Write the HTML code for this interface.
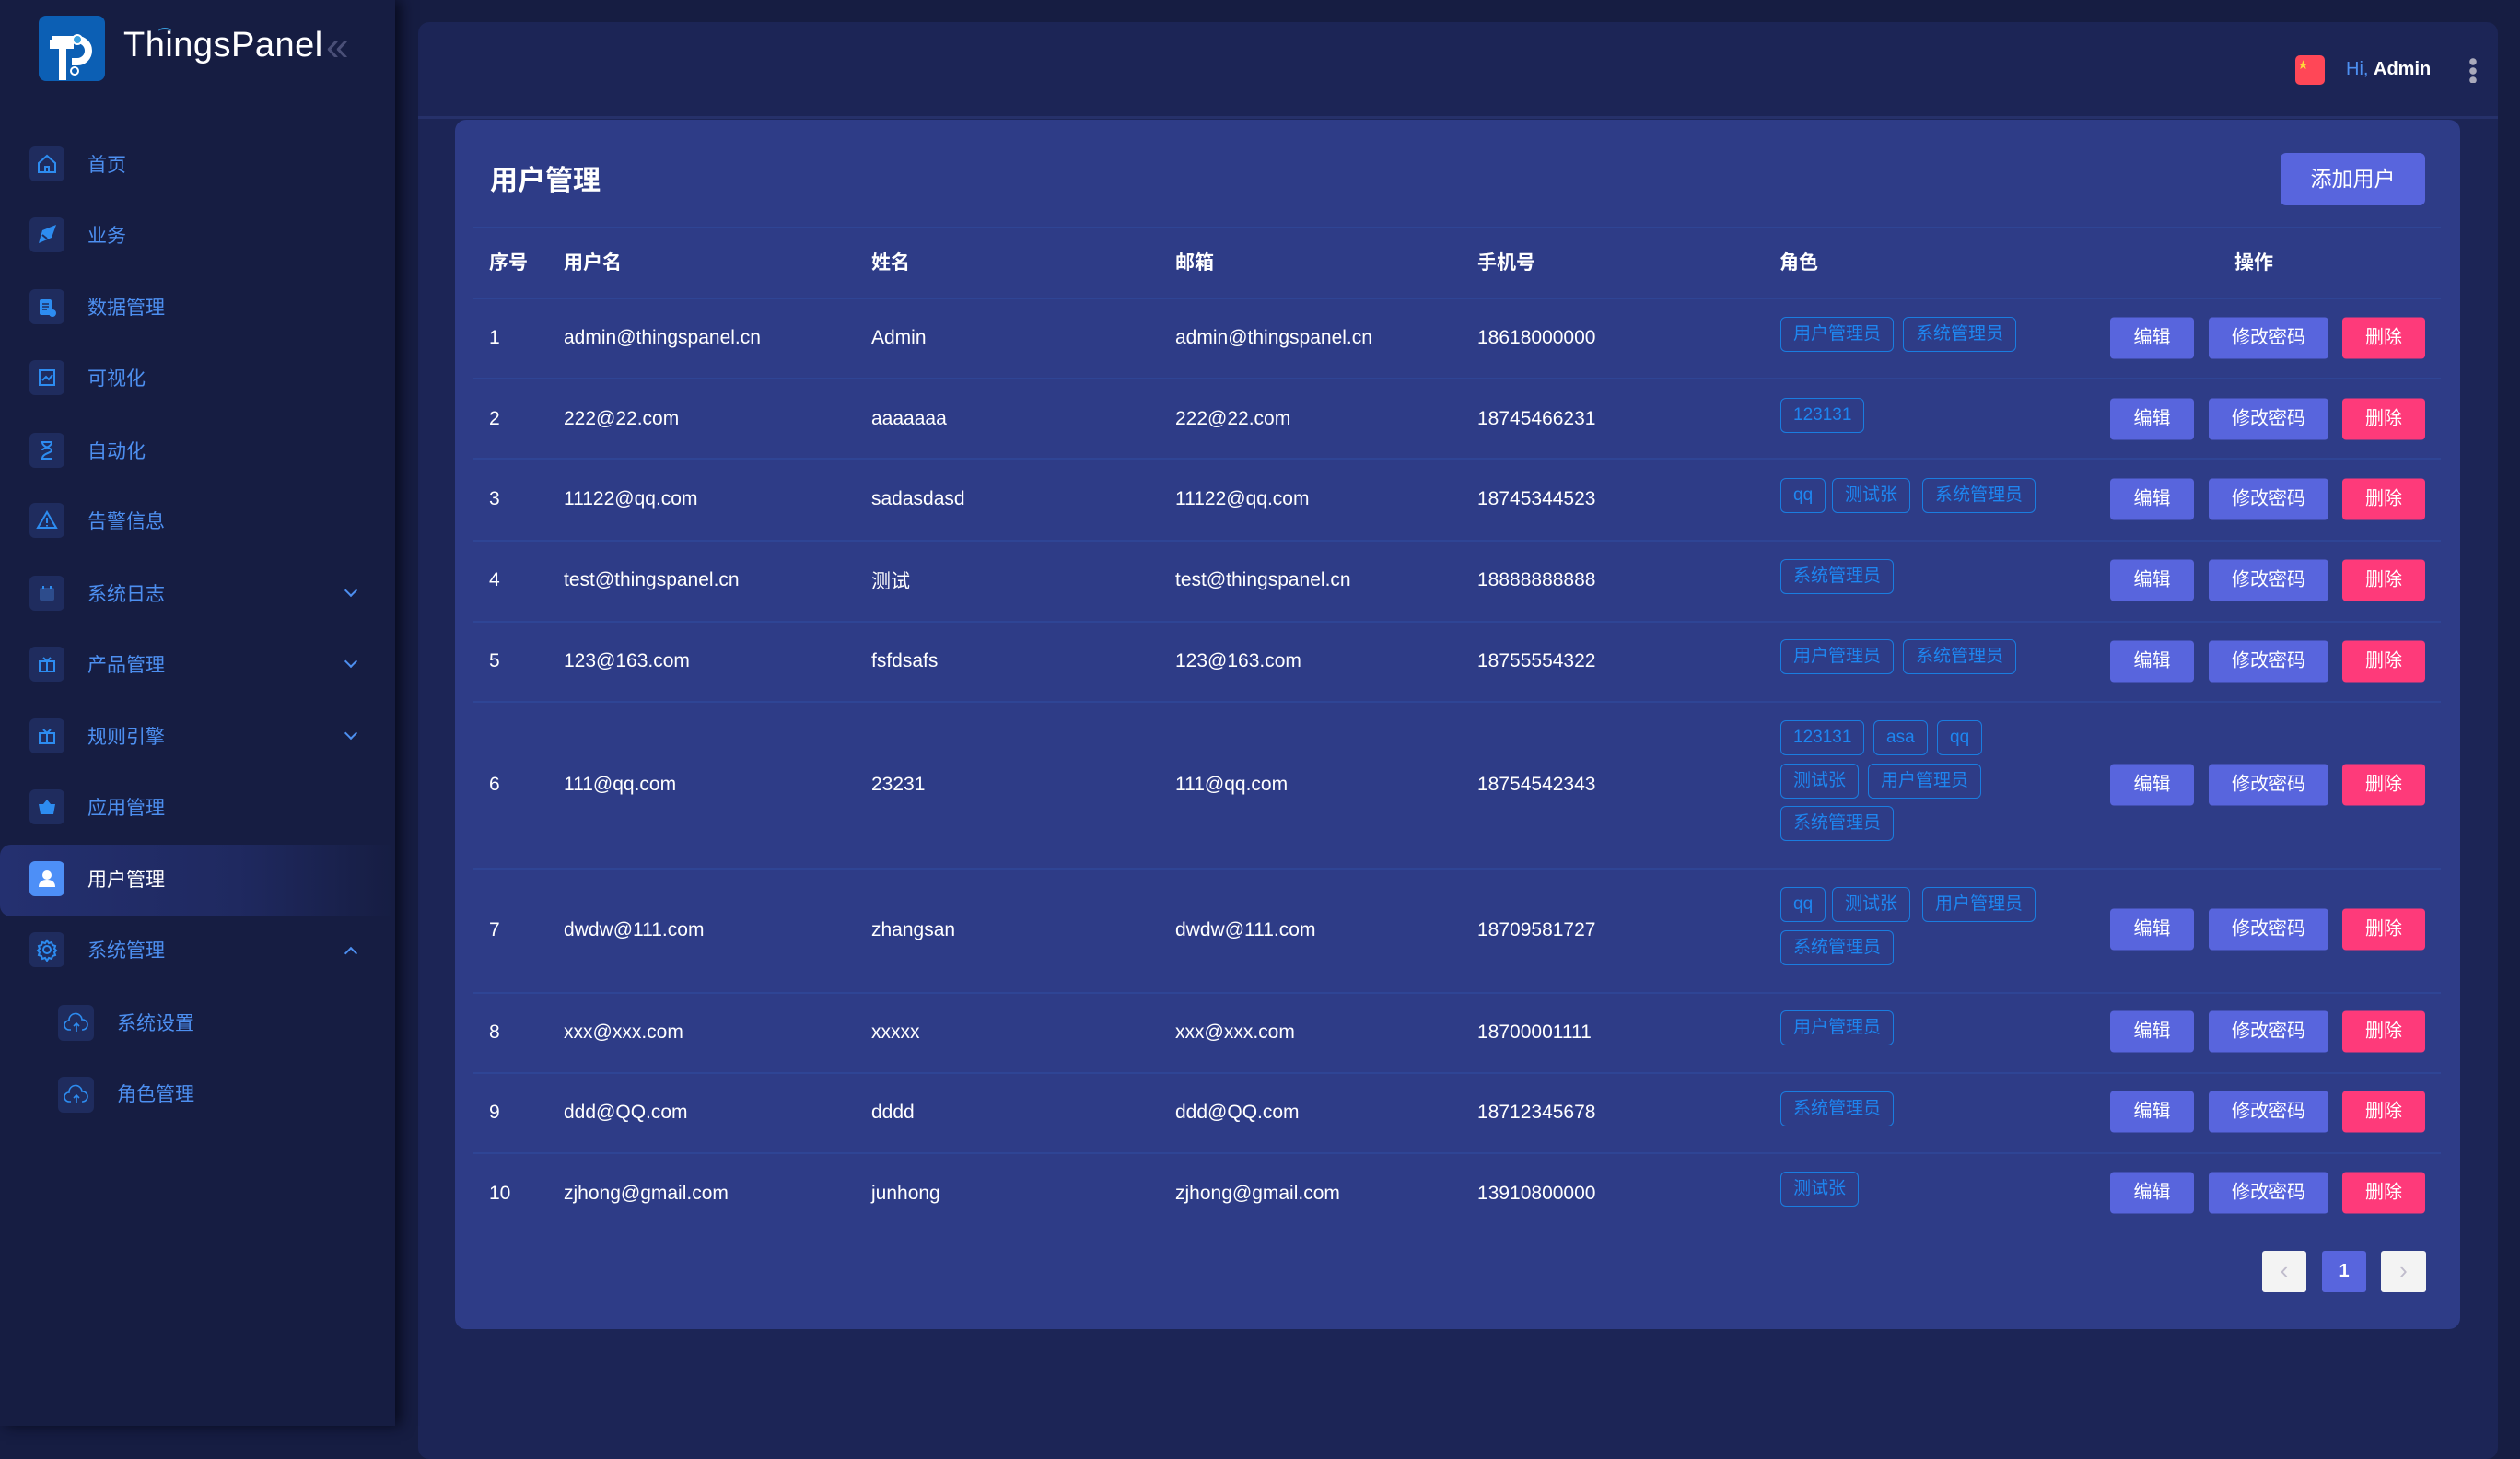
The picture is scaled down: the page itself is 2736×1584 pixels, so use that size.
<!DOCTYPE html>
<html><head><meta charset="utf-8"><style>
*{margin:0;padding:0;box-sizing:border-box}
body{width:2736px;height:1548px;background:#161d42;font-family:"Liberation Sans","Noto Sans CJK SC",sans-serif;position:relative;overflow:hidden;color:#fff}
.a{position:absolute}
.side{left:0;top:0;width:429px;height:1548px;background:#161d42;box-shadow:6px 0 14px #080b1e}
.ib{position:absolute;width:38px;height:38px;border-radius:6px;background:#1f2c5e;display:flex;align-items:center;justify-content:center}
.mt{position:absolute;font-size:21px;color:#4d8ff0;transform:translateY(-50%)}
.chev{position:absolute;left:376px;width:10px;height:10px;border-right:2px solid #4d8ff0;border-bottom:2px solid #4d8ff0}
.outer{left:454px;top:24px;width:2258px;height:1560px;background:#1c2556;border-radius:12px}
.card{left:494px;top:130px;width:2177px;height:1313px;background:#2e3c87;border-radius:12px}
.hl{position:absolute;left:514px;width:2136px;height:2px;background:#2f4595}
.th{position:absolute;top:284px;transform:translateY(-50%);font-size:21px;font-weight:bold}
.td{position:absolute;transform:translateY(-50%);font-size:21px;color:#fff}
.tag{position:absolute;height:38px;line-height:36px;border:1.5px solid #1a7de0;border-radius:6px;color:#1e86f0;font-size:19px;padding:0 13px;transform:translateY(-50%);white-space:nowrap}
.btn{position:absolute;height:45px;line-height:45px;text-align:center;border-radius:4px;font-size:20px;color:#fff;transform:translateY(-50%)}
.e{left:2291px;width:91px;background:#5865dd}
.p{left:2398px;width:130px;background:#5865dd}
.d{left:2543px;width:90px;background:#fe3a7a}
</style></head><body>
<div class="a outer"></div>
<div class="a" style="left:454px;top:126px;width:2258px;height:3px;background:#26316a"></div>
<div class="a side"></div>
<div class="a" style="left:42px;top:17px;width:72px;height:71px;background:#0c5fb4;border-radius:8px">
<svg width="72" height="71" viewBox="0 0 72 71"><path d="M14 26h28a12 12 0 0 1 0 24h-6" fill="none" stroke="#fff" stroke-width="8"/><path d="M12 26h26v10H30v34h-8V36H12z" fill="#fff"/><circle cx="42" cy="26" r="5" fill="#3aa0e0" stroke="#fff" stroke-width="2"/><circle cx="39" cy="60" r="4" fill="none" stroke="#fff" stroke-width="2"/></svg></div>
<div class="a" style="left:134px;top:28px;font-size:38px;color:#fff;letter-spacing:0.5px">ThingsPanel</div>
<div class="a" style="left:172px;top:30px;width:14px;height:8px;border-top:2px solid #3aa0e0;border-radius:50% 50% 0 0"></div>
<div class="a" style="left:354px;top:26px;font-size:44px;color:#4a4f77">«</div>
<div class="a" style="left:0;top:917px;width:429px;height:78px;border-radius:12px 0 0 12px;background:linear-gradient(90deg,#243070,#1f2960 60%,#161d42)"></div>
<div class="ib" style="left:32px;top:159px"><svg width="24" height="24" viewBox="0 0 24 24"><path d="M3 11L12 3l9 8v10H3z M10 21v-6h4v6" fill="none" stroke="#2d8cf0" stroke-width="2"/></svg></div><div class="mt" style="left:95px;top:178px">首页</div>
<div class="ib" style="left:32px;top:236px"><svg width="26" height="26" viewBox="0 0 26 26"><path d="M4 22l4-14 15-6-5 14z" fill="#2d8cf0"/><path d="M8 13l5 4" stroke="#1f2c5e" stroke-width="2"/></svg></div><div class="mt" style="left:95px;top:255px">业务</div>
<div class="ib" style="left:32px;top:314px"><svg width="24" height="24" viewBox="0 0 24 24"><rect x="4" y="4" width="13" height="17" rx="2" fill="#2d8cf0"/><path d="M7 9h7M7 12h7M7 15h5" stroke="#1f2c5e" stroke-width="1.5"/><circle cx="18" cy="19" r="4" fill="#2d8cf0"/></svg></div><div class="mt" style="left:95px;top:333px">数据管理</div>
<div class="ib" style="left:32px;top:391px"><svg width="24" height="24" viewBox="0 0 24 24"><rect x="4" y="4" width="16" height="16" fill="none" stroke="#2d8cf0" stroke-width="2"/><path d="M7 15l4-4 3 3 4-5" fill="none" stroke="#2d8cf0" stroke-width="2"/></svg></div><div class="mt" style="left:95px;top:410px">可视化</div>
<div class="ib" style="left:32px;top:470px"><svg width="24" height="24" viewBox="0 0 24 24"><path d="M6 3h12M6 21h12M7 3c0 6 10 6 10 9s-10 3-10 9M17 3c0 6-10 6-10 9" fill="none" stroke="#2d8cf0" stroke-width="2"/></svg></div><div class="mt" style="left:95px;top:489px">自动化</div>
<div class="ib" style="left:32px;top:546px"><svg width="24" height="24" viewBox="0 0 24 24"><path d="M12 3L2 20h20z M12 9v6 M12 17v1.5" fill="none" stroke="#2d8cf0" stroke-width="2"/></svg></div><div class="mt" style="left:95px;top:565px">告警信息</div>
<div class="ib" style="left:32px;top:625px"><svg width="24" height="24" viewBox="0 0 24 24"><rect x="4" y="6" width="16" height="14" rx="2" fill="#2d4c8c"/><path d="M8 4v4M16 4v4" stroke="#2d8cf0" stroke-width="2"/></svg></div><div class="mt" style="left:95px;top:644px">系统日志</div><div class="chev" style="top:636px;transform:rotate(45deg)"></div>
<div class="ib" style="left:32px;top:702px"><svg width="24" height="24" viewBox="0 0 24 24"><rect x="4" y="9" width="16" height="11" fill="none" stroke="#2d8cf0" stroke-width="2"/><path d="M3 9h18M12 9v11M8 5l4 4 4-4" fill="none" stroke="#2d8cf0" stroke-width="2"/></svg></div><div class="mt" style="left:95px;top:721px">产品管理</div><div class="chev" style="top:713px;transform:rotate(45deg)"></div>
<div class="ib" style="left:32px;top:780px"><svg width="24" height="24" viewBox="0 0 24 24"><rect x="4" y="9" width="16" height="11" fill="none" stroke="#2d8cf0" stroke-width="2"/><path d="M3 9h18M12 9v11M8 5l4 4 4-4" fill="none" stroke="#2d8cf0" stroke-width="2"/></svg></div><div class="mt" style="left:95px;top:799px">规则引擎</div><div class="chev" style="top:791px;transform:rotate(45deg)"></div>
<div class="ib" style="left:32px;top:857px"><svg width="24" height="24" viewBox="0 0 24 24"><path d="M3 9h18l-2 11H5z M8 9l4-5 4 5" fill="#2d8cf0"/></svg></div><div class="mt" style="left:95px;top:876px">应用管理</div>
<div class="ib" style="left:32px;top:935px;background:#4d8ff7"><svg width="26" height="26" viewBox="0 0 26 26"><circle cx="13" cy="9" r="5" fill="#fff"/><path d="M4 22c0-6 4-8 9-8s9 2 9 8z" fill="#fff"/></svg></div><div class="mt" style="left:95px;top:954px;color:#fff">用户管理</div>
<div class="ib" style="left:32px;top:1012px"><svg width="26" height="26" viewBox="0 0 26 26"><circle cx="13" cy="13" r="4" fill="none" stroke="#2d8cf0" stroke-width="2"/><path d="M13 3l2 3 3-1 1 3 3 1-1 3 2 2-2 2 1 3-3 1-1 3-3-1-2 3-2-3-3 1-1-3-3-1 1-3-2-2 2-2-1-3 3-1 1-3 3 1z" fill="none" stroke="#2d8cf0" stroke-width="2"/></svg></div><div class="mt" style="left:95px;top:1031px">系统管理</div><div class="chev" style="top:1030px;transform:rotate(-135deg)"></div>
<div class="ib" style="left:63px;top:1091px;width:39px;height:39px"><svg width="28" height="24" viewBox="0 0 28 24"><path d="M8 19H6a5 5 0 0 1 0-10 7 7 0 0 1 14-1 5 5 0 0 1 1 11h-1 M14 21v-9 M11 15l3-3 3 3" fill="none" stroke="#2d8cf0" stroke-width="1.6"/></svg></div><div class="mt" style="left:127px;top:1110px">系统设置</div>
<div class="ib" style="left:63px;top:1169px;width:39px;height:39px"><svg width="28" height="24" viewBox="0 0 28 24"><path d="M8 19H6a5 5 0 0 1 0-10 7 7 0 0 1 14-1 5 5 0 0 1 1 11h-1 M14 21v-9 M11 15l3-3 3 3" fill="none" stroke="#2d8cf0" stroke-width="1.6"/></svg></div><div class="mt" style="left:127px;top:1187px">角色管理</div>
<div class="a" style="left:2492px;top:60px;width:32px;height:32px;background:#ff4757;border-radius:5px"><span style="position:absolute;left:3px;top:2px;font-size:11px;color:#ffd93a">★</span></div>
<div class="a" style="left:2547px;top:64px;font-size:20px"><span style="color:#4d8ff0">Hi, </span><b>Admin</b></div>
<div class="a" style="left:2681px;top:62px;width:8px;height:28px;background:radial-gradient(circle,#aab 3.5px,transparent 4px) 0 0/8px 10px"></div>
<div class="a card"></div>
<div class="a" style="left:532px;top:171px;font-size:30px;font-weight:bold">用户管理</div>
<div class="a" style="left:2476px;top:166px;width:157px;height:57px;background:#5865dd;border-radius:6px;font-size:23px;line-height:57px;text-align:center">添加用户</div>
<div class="hl" style="top:246px"></div>
<div class="th" style="left:531px">序号</div><div class="th" style="left:612px">用户名</div><div class="th" style="left:946px">姓名</div><div class="th" style="left:1276px">邮箱</div><div class="th" style="left:1604px">手机号</div><div class="th" style="left:1932px">角色</div><div class="th" style="left:2426px">操作</div>
<div class="hl" style="top:323px"></div>
<div class="hl" style="top:410px"></div><div class="hl" style="top:497px"></div><div class="hl" style="top:586px"></div><div class="hl" style="top:674px"></div><div class="hl" style="top:761px"></div><div class="hl" style="top:942px"></div><div class="hl" style="top:1077px"></div><div class="hl" style="top:1164px"></div><div class="hl" style="top:1251px"></div>

<div class="td" style="left:531px;top:367px">1</div><div class="td" style="left:612px;top:367px">admin@thingspanel.cn</div><div class="td" style="left:946px;top:367px">Admin</div><div class="td" style="left:1276px;top:367px">admin@thingspanel.cn</div><div class="td" style="left:1604px;top:367px">18618000000</div>
<div class="tag" style="left:1933px;top:363px">用户管理员</div><div class="tag" style="left:2066px;top:363px">系统管理员</div>
<div class="btn e" style="top:367px">编辑</div><div class="btn p" style="top:367px">修改密码</div><div class="btn d" style="top:367px">删除</div>

<div class="td" style="left:531px;top:455px">2</div><div class="td" style="left:612px;top:455px">222@22.com</div><div class="td" style="left:946px;top:455px">aaaaaaa</div><div class="td" style="left:1276px;top:455px">222@22.com</div><div class="td" style="left:1604px;top:455px">18745466231</div>
<div class="tag" style="left:1933px;top:451px">123131</div>
<div class="btn e" style="top:455px">编辑</div><div class="btn p" style="top:455px">修改密码</div><div class="btn d" style="top:455px">删除</div>

<div class="td" style="left:531px;top:542px">3</div><div class="td" style="left:612px;top:542px">11122@qq.com</div><div class="td" style="left:946px;top:542px">sadasdasd</div><div class="td" style="left:1276px;top:542px">11122@qq.com</div><div class="td" style="left:1604px;top:542px">18745344523</div>
<div class="tag" style="left:1933px;top:538px">qq</div><div class="tag" style="left:1989px;top:538px">测试张</div><div class="tag" style="left:2087px;top:538px">系统管理员</div>
<div class="btn e" style="top:542px">编辑</div><div class="btn p" style="top:542px">修改密码</div><div class="btn d" style="top:542px">删除</div>

<div class="td" style="left:531px;top:630px">4</div><div class="td" style="left:612px;top:630px">test@thingspanel.cn</div><div class="td" style="left:946px;top:630px">测试</div><div class="td" style="left:1276px;top:630px">test@thingspanel.cn</div><div class="td" style="left:1604px;top:630px">18888888888</div>
<div class="tag" style="left:1933px;top:626px">系统管理员</div>
<div class="btn e" style="top:630px">编辑</div><div class="btn p" style="top:630px">修改密码</div><div class="btn d" style="top:630px">删除</div>

<div class="td" style="left:531px;top:718px">5</div><div class="td" style="left:612px;top:718px">123@163.com</div><div class="td" style="left:946px;top:718px">fsfdsafs</div><div class="td" style="left:1276px;top:718px">123@163.com</div><div class="td" style="left:1604px;top:718px">18755554322</div>
<div class="tag" style="left:1933px;top:713px">用户管理员</div><div class="tag" style="left:2066px;top:713px">系统管理员</div>
<div class="btn e" style="top:718px">编辑</div><div class="btn p" style="top:718px">修改密码</div><div class="btn d" style="top:718px">删除</div>

<div class="td" style="left:531px;top:852px">6</div><div class="td" style="left:612px;top:852px">111@qq.com</div><div class="td" style="left:946px;top:852px">23231</div><div class="td" style="left:1276px;top:852px">111@qq.com</div><div class="td" style="left:1604px;top:852px">18754542343</div>
<div class="tag" style="left:1933px;top:801px">123131</div><div class="tag" style="left:2034px;top:801px">asa</div><div class="tag" style="left:2103px;top:801px">qq</div>
<div class="tag" style="left:1933px;top:848px">测试张</div><div class="tag" style="left:2028px;top:848px">用户管理员</div>
<div class="tag" style="left:1933px;top:894px">系统管理员</div>
<div class="btn e" style="top:852px">编辑</div><div class="btn p" style="top:852px">修改密码</div><div class="btn d" style="top:852px">删除</div>

<div class="td" style="left:531px;top:1010px">7</div><div class="td" style="left:612px;top:1010px">dwdw@111.com</div><div class="td" style="left:946px;top:1010px">zhangsan</div><div class="td" style="left:1276px;top:1010px">dwdw@111.com</div><div class="td" style="left:1604px;top:1010px">18709581727</div>
<div class="tag" style="left:1933px;top:982px">qq</div><div class="tag" style="left:1989px;top:982px">测试张</div><div class="tag" style="left:2087px;top:982px">用户管理员</div>
<div class="tag" style="left:1933px;top:1029px">系统管理员</div>
<div class="btn e" style="top:1009px">编辑</div><div class="btn p" style="top:1009px">修改密码</div><div class="btn d" style="top:1009px">删除</div>

<div class="td" style="left:531px;top:1121px">8</div><div class="td" style="left:612px;top:1121px">xxx@xxx.com</div><div class="td" style="left:946px;top:1121px">xxxxx</div><div class="td" style="left:1276px;top:1121px">xxx@xxx.com</div><div class="td" style="left:1604px;top:1121px">18700001111</div>
<div class="tag" style="left:1933px;top:1116px">用户管理员</div>
<div class="btn e" style="top:1120px">编辑</div><div class="btn p" style="top:1120px">修改密码</div><div class="btn d" style="top:1120px">删除</div>

<div class="td" style="left:531px;top:1208px">9</div><div class="td" style="left:612px;top:1208px">ddd@QQ.com</div><div class="td" style="left:946px;top:1208px">dddd</div><div class="td" style="left:1276px;top:1208px">ddd@QQ.com</div><div class="td" style="left:1604px;top:1208px">18712345678</div>
<div class="tag" style="left:1933px;top:1204px">系统管理员</div>
<div class="btn e" style="top:1207px">编辑</div><div class="btn p" style="top:1207px">修改密码</div><div class="btn d" style="top:1207px">删除</div>

<div class="td" style="left:531px;top:1296px">10</div><div class="td" style="left:612px;top:1296px">zjhong@gmail.com</div><div class="td" style="left:946px;top:1296px">junhong</div><div class="td" style="left:1276px;top:1296px">zjhong@gmail.com</div><div class="td" style="left:1604px;top:1296px">13910800000</div>
<div class="tag" style="left:1933px;top:1291px">测试张</div>
<div class="btn e" style="top:1295px">编辑</div><div class="btn p" style="top:1295px">修改密码</div><div class="btn d" style="top:1295px">删除</div>

<div class="a" style="left:2456px;top:1358px;width:48px;height:45px;background:#f3f3f3;border-radius:3px;color:#c0bccc;font-size:26px;text-align:center;line-height:42px">‹</div>
<div class="a" style="left:2521px;top:1358px;width:48px;height:45px;background:#5865dd;border-radius:3px;font-size:20px;font-weight:bold;text-align:center;line-height:45px">1</div>
<div class="a" style="left:2585px;top:1358px;width:49px;height:45px;background:#f3f3f3;border-radius:3px;color:#c0bccc;font-size:26px;text-align:center;line-height:42px">›</div>
</body></html>
